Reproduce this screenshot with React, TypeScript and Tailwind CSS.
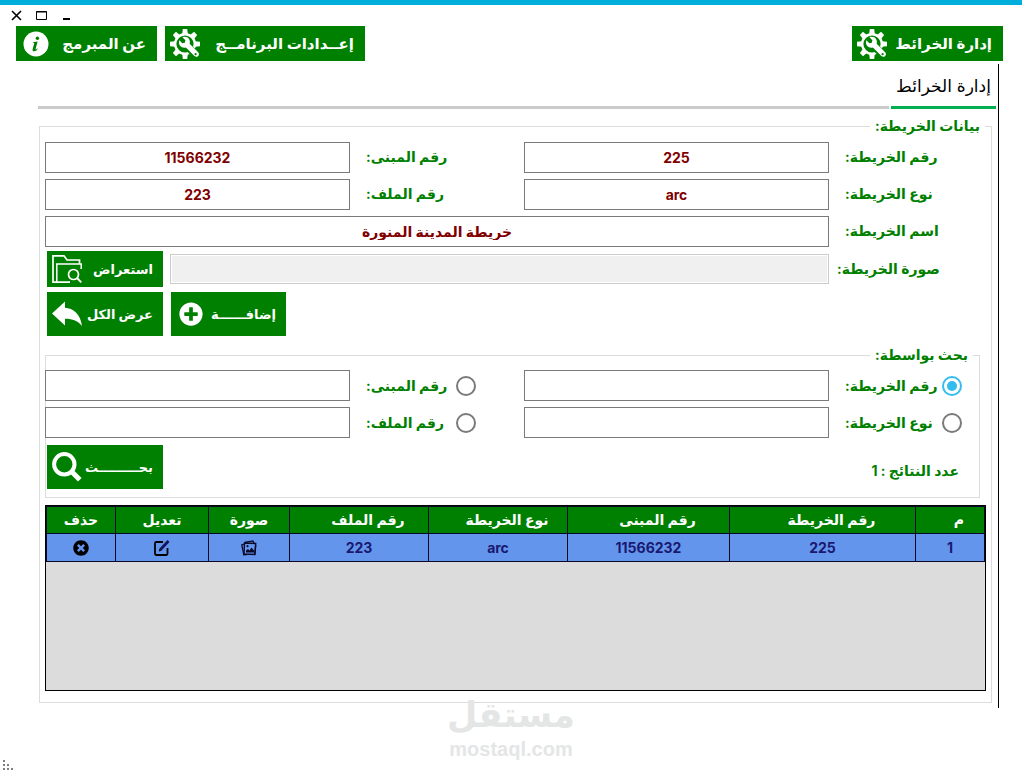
import type { InputHTMLAttributes, ReactNode } from "react";
import { useState } from "react";
import clsx from "clsx";
import { FaPlusCircle, FaTimesCircle } from "react-icons/fa";

const GearIcon = () => (
  <svg viewBox="0 0 30 30" className="size-[30px] shrink-0" aria-hidden="true">
    <circle cx="15" cy="15" r="9.8" fill="none" stroke="#fff" strokeWidth="2.400" />
    {[0, 45, 90, 135, 180, 225, 270, 315].map((angle) => (
      <path
        key={angle}
        d="M12.800 0h4.400l.6 5h-5.600z"
        fill="#fff"
        transform={`rotate(${angle} 15 15)`}
      />
    ))}
    <path d="M17 17l12 12" stroke="#008000" strokeWidth="7.500" />
    <path
      d="M9.300 11.200l3.100 3 2.400-.5.600-2.400-3-3.100c2.600-.9 5.400-.2 6.700 2 .9 1.500 1 3 .5 4.600l8.600 8.500c2.300 2.700-1.200 6-3.800 3.700l-8.500-8.600c-2 .6-4.200.2-5.600-1.400-1.400-1.500-1.700-3.800-1-5.800z"
      fill="#fff"
    />
    <circle cx="25.600" cy="25.200" r="1.100" fill="#008000" />
  </svg>
);

const InfoIcon = () => (
  <svg viewBox="0 0 26 26" className="mx-0.5 size-[26px] shrink-0" aria-hidden="true">
    <circle cx="13" cy="13" r="12.500" fill="#fff" />
    <circle cx="14.400" cy="7.300" r="1.700" fill="#008000" />
    <path
      d="M9.800 11.300l4.800-.8-2 7.500c-.2.900.5.700 1.700-.6l.5.400c-1.200 1.800-2.500 2.500-3.700 2.500-1.400 0-1.800-.9-1.400-2.300l1.500-5.400c.2-.7-.1-.9-1.400-.8z"
      fill="#008000"
    />
  </svg>
);

const FolderSearchIcon = () => (
  <svg viewBox="0 0 30 30" className="size-[30px] shrink-0" fill="none" stroke="#fff" aria-hidden="true">
    <path d="M18 28.200H1V1.800h11l3 4.200h12.500v4" strokeWidth="1.700" />
    <path d="M4.800 28V10h24.400v5" strokeWidth="1.500" />
    <circle cx="21.500" cy="20.500" r="5" strokeWidth="1.700" />
    <path d="M25 24l4.300 4.300" strokeWidth="1.800" />
  </svg>
);

const BackIcon = () => (
  <svg viewBox="0 0 30 26" className="h-[26px] w-[30px] shrink-0" aria-hidden="true">
    <path d="M0 12.500L13 .5v6.300c8 .4 15.500 6 17 18.200-4-5-9-7.200-17-7.200v6.700z" fill="#fff" />
  </svg>
);

const SearchIcon = () => (
  <svg viewBox="0 0 30 30" className="size-[30px] shrink-0" fill="none" stroke="#fff" aria-hidden="true">
    <circle cx="12.300" cy="12.300" r="10.200" strokeWidth="4" />
    <path d="M20 20l7.800 7.800" strokeWidth="5" />
  </svg>
);

const PhotosIcon = () => (
  <svg viewBox="0 0 16 16" className="size-4" fill="none" stroke="#0a0a28" aria-hidden="true">
    <path d="M3.500 3l11.200.5-.7 11-11-.5z" strokeWidth="1.400" />
    <path d="M3 4L.8 4.800l2 10 3-.3M3.500 2.500L12 .9l1 2.500M14.700 5l-1 9" strokeWidth="1.300" />
    <path d="M5 12.500v-2L7 9l1.500 1.500 2-3 2.500 3v2z" fill="#0a0a28" stroke="none" />
    <circle cx="6.500" cy="6.200" r="1.100" fill="#0a0a28" stroke="none" />
  </svg>
);

const EditIcon = () => (
  <svg viewBox="0 0 16 16" className="size-4" fill="none" stroke="#000" aria-hidden="true">
    <path d="M9 2H2.200q-1.200 0-1.200 1.200v10.600q0 1.200 1.200 1.200h10.100q1.200 0 1.200-1.200V8" strokeWidth="1.800" />
    <path d="M6.500 9.500L14.500 1" stroke="#14145a" strokeWidth="2.800" />
    <path d="M4.800 11.500l.8-3 2.200 2.100z" fill="#000" stroke="none" />
  </svg>
);

// thick cross reaching out to the circle's rim
const DeleteIcon = () => <FaTimesCircle className="size-4 text-black" aria-hidden="true" />;

type GreenButtonProps = { label: string; icon: ReactNode; className?: string };

const GreenButton = ({ label, icon, className }: GreenButtonProps) => (
  <button
    type="button"
    className={clsx(
      "flex shrink-0 items-center justify-between bg-[#008000] pe-[5px] font-bold whitespace-nowrap text-white",
      className
    )}
  >
    <span>{label}</span>
    {icon}
  </button>
);

const TextBox = ({ className, ...props }: InputHTMLAttributes<HTMLInputElement>) => (
  <input
    type="text"
    className={clsx(
      "h-[31px] w-full min-w-0 border border-[#7a7a7a] bg-white text-center text-sm font-bold text-[#800000] outline-none",
      className
    )}
    {...props}
  />
);

type FieldLabelProps = { id: string; children: ReactNode };

const FieldLabel = ({ id, children }: FieldLabelProps) => (
  <label htmlFor={id} className="pe-4 pb-0.5 text-end whitespace-nowrap">
    {children}
  </label>
);

type SearchOptionProps = {
  id: string;
  label: string;
  checked: boolean;
  onSelect: () => void;
};

const SearchOption = ({ id, label, checked, onSelect }: SearchOptionProps) => (
  <div className="flex items-center justify-between pe-4">
    <input
      type="radio"
      id={id}
      name="searchBy"
      checked={checked}
      onChange={onSelect}
      className="size-5 appearance-none rounded-full border-2 border-[#7a7a7a] bg-white bg-clip-content p-[3px] checked:border-[#33bdee] checked:bg-[#33bdee]"
    />
    <label htmlFor={id} className="whitespace-nowrap">
      {label}
    </label>
  </div>
);

const columns = [
  { title: "م", width: "w-[69px]", sortable: true },
  { title: "رقم الخريطة", width: "w-[186px]", sortable: true },
  { title: "رقم المبنى", width: "w-[162px]", sortable: true },
  { title: "نوع الخريطة", width: "w-[139px]", sortable: true },
  { title: "رقم الملف", width: "w-[139px]", sortable: true },
  { title: "صورة", width: "w-[81px]", sortable: false },
  { title: "تعديل", width: "w-[93px]", sortable: false },
  { title: "حذف", width: "w-[69px]", sortable: false },
];

const rows = [{ index: "1", map: "225", building: "11566232", type: "arc", file: "223" }];

const cell = "border-b border-l border-[#0a0a28] p-0 text-center";

export default function App() {
  const [searchBy, setSearchBy] = useState("map");

  return (
    <div
      dir="rtl"
      className="relative flex min-h-screen flex-col border-t-[5px] border-[#00aedb] bg-white font-['Inter','DejaVu_Sans',sans-serif] text-sm font-bold text-[#008000]"
    >
      <div dir="ltr" className="flex h-[21px] items-center gap-3.5 px-[11px] text-black">
        <button type="button" aria-label="إغلاق">
          <svg viewBox="0 0 11 11" className="size-[11px]" stroke="#000" strokeWidth="1.600">
            <path d="M1 1l9 9M10 1l-9 9" />
          </svg>
        </button>
        <button type="button" aria-label="تكبير">
          <svg viewBox="0 0 11 11" className="size-[11px]" fill="none" stroke="#000">
            <path d="M.5 1.500h10v8H.5zM0 2h11" />
          </svg>
        </button>
        <button type="button" aria-label="تصغير">
          <svg viewBox="0 0 11 11" className="size-[11px]" fill="#000">
            <path d="M2 8h7v2H2z" />
          </svg>
        </button>
      </div>

      <header className="flex h-[35px] items-stretch gap-2 ps-[19px] pe-4 text-[15px]">
        <GreenButton label="إدارة الخرائط" icon={<GearIcon />} className="w-[151px] ps-[11px]" />
        <div className="flex-1" />
        <GreenButton label="إعــدادات البرنامــج" icon={<GearIcon />} className="w-[200px] ps-[11px]" />
        <GreenButton label="عن المبرمج" icon={<InfoIcon />} className="w-[141px] ps-[11px]" />
      </header>

      <main className="mt-[3px] ms-[23px] border-r border-black ps-0.5 pb-[5px]">
        <div className="flex items-end gap-0.5 pe-[38px]">
          <h1 className="h-[45px] w-[105px] border-b-[3px] border-[#00b050] pt-2.5 text-center text-[17px] leading-6 font-normal whitespace-nowrap text-black">
            إدارة الخرائط
          </h1>
          <div className="h-[3px] flex-1 bg-[#cbcbcb]" />
        </div>

        <fieldset className="ms-1 me-[39px] mt-[7px] min-w-0 border border-[#dcdcdc] px-[5px] pb-[11px]">
          <legend className="ms-px px-[5px] leading-5">بيانات الخريطة:</legend>

          <div className="mt-1.5 grid grid-cols-[157px_1fr_174px_1fr] items-center gap-y-1.5">
            <FieldLabel id="mapNo">رقم الخريطة:</FieldLabel>
            <TextBox id="mapNo" defaultValue="225" />
            <FieldLabel id="buildingNo">رقم المبنى:</FieldLabel>
            <TextBox id="buildingNo" defaultValue="11566232" />
            <FieldLabel id="mapType">نوع الخريطة:</FieldLabel>
            <TextBox id="mapType" defaultValue="arc" />
            <FieldLabel id="fileNo">رقم الملف:</FieldLabel>
            <TextBox id="fileNo" defaultValue="223" />
            <FieldLabel id="mapName">اسم الخريطة:</FieldLabel>
            <TextBox id="mapName" defaultValue="خريطة المدينة المنورة" className="col-span-3" />
          </div>

          <div className="mt-1 flex items-center pe-0.5">
            <label htmlFor="mapImage" className="w-[157px] shrink-0 pe-2 text-end whitespace-nowrap">
              صورة الخريطة:
            </label>
            <input
              id="mapImage"
              type="text"
              disabled
              className="me-[7px] h-[30px] min-w-0 flex-1 border border-[#cccccc] bg-[#f0f0f0] bg-clip-content p-px"
            />
            <GreenButton
              label="استعراض"
              icon={<FolderSearchIcon />}
              className="h-9 w-[116px] ps-2.5 text-[13px]"
            />
          </div>

          <div className="mt-[5px] flex justify-end gap-2 pe-0.5 text-[13px]">
            <GreenButton
              label="إضافــــــة"
              icon={<FaPlusCircle className="mx-[3px] size-6 shrink-0" />}
              className="h-11 w-[115px] ps-2.5"
            />
            <GreenButton label="عرض الكل" icon={<BackIcon />} className="h-11 w-[116px] ps-2.5" />
          </div>

          <fieldset className="ms-1.5 mt-[9px] min-w-0 border border-[#dcdcdc] pb-2">
            <legend className="ms-1.5 px-[5px] leading-5">بحث بواسطة:</legend>

            <div className="-me-px mt-[5px] grid grid-cols-[150px_1fr_174px_1fr] items-center gap-y-1.5">
              <div className="ps-[17px]">
                <SearchOption
                  id="byMap"
                  label="رقم الخريطة:"
                  checked={searchBy === "map"}
                  onSelect={() => setSearchBy("map")}
                />
              </div>
              <TextBox aria-label="رقم الخريطة" />
              <div className="ps-12">
                <SearchOption
                  id="byBuilding"
                  label="رقم المبنى:"
                  checked={searchBy === "building"}
                  onSelect={() => setSearchBy("building")}
                />
              </div>
              <TextBox aria-label="رقم المبنى" />
              <div className="ps-[17px]">
                <SearchOption
                  id="byType"
                  label="نوع الخريطة:"
                  checked={searchBy === "type"}
                  onSelect={() => setSearchBy("type")}
                />
              </div>
              <TextBox aria-label="نوع الخريطة" />
              <div className="ps-12">
                <SearchOption
                  id="byFile"
                  label="رقم الملف:"
                  checked={searchBy === "file"}
                  onSelect={() => setSearchBy("file")}
                />
              </div>
              <TextBox aria-label="رقم الملف" />
            </div>

            <div className="mt-[7px] flex items-center justify-between ps-5 pe-px">
              <p className="pt-2">عدد النتائج : 1</p>
              <GreenButton
                label="بحـــــــــث"
                icon={<SearchIcon />}
                className="h-11 w-[116px] ps-2.5 text-[13px]"
              />
            </div>
          </fieldset>

          <div className="mt-[7px] min-h-[186px] border border-black bg-[#dcdcdc]">
            <table className="w-full table-fixed border-separate border-spacing-0 border-t border-r border-[#0a0a28]">
              <thead>
                <tr className="h-[27px] bg-[#008000] text-white">
                  {columns.map((col) => (
                    <th key={col.title} className={clsx(cell, col.width)}>
                      <span className={clsx("block", col.sortable && "pl-[18px]")}>{col.title}</span>
                    </th>
                  ))}
                </tr>
              </thead>
              <tbody>
                {rows.map((row) => (
                  <tr key={row.index} className="h-7 bg-[#6495ed] text-[#191970]">
                    <td className={cell}>{row.index}</td>
                    <td className={cell}>{row.map}</td>
                    <td className={cell}>{row.building}</td>
                    <td className={cell}>{row.type}</td>
                    <td className={cell}>{row.file}</td>
                    <td className={cell}>
                      <button type="button" aria-label="صورة" className="mx-auto block">
                        <PhotosIcon />
                      </button>
                    </td>
                    <td className={cell}>
                      <button type="button" aria-label="تعديل" className="mx-auto block">
                        <EditIcon />
                      </button>
                    </td>
                    <td className={cell}>
                      <button type="button" aria-label="حذف" className="mx-auto block">
                        <DeleteIcon />
                      </button>
                    </td>
                  </tr>
                ))}
              </tbody>
            </table>
          </div>
        </fieldset>
      </main>

      {/* watermark */}
      <div className="pointer-events-none absolute inset-x-0 top-[686px] text-center text-[#e4e6e6]">
        <p className="text-[35px] leading-[46px]">مستقل</p>
        <p dir="ltr" className="font-['Liberation_Sans',sans-serif] text-xl leading-6">
          mostaql.com
        </p>
      </div>

      <footer className="mt-auto flex justify-end p-[3px]">
        <svg viewBox="0 0 10 10" className="size-2.5" fill="#7f7f7f" aria-hidden="true">
          <path d="M0 0h2v2H0zM0 4h2v2H0zM4 4h2v2H4zM0 8h2v2H0zM4 8h2v2H4zM8 8h2v2H8z" />
        </svg>
      </footer>
    </div>
  );
}
